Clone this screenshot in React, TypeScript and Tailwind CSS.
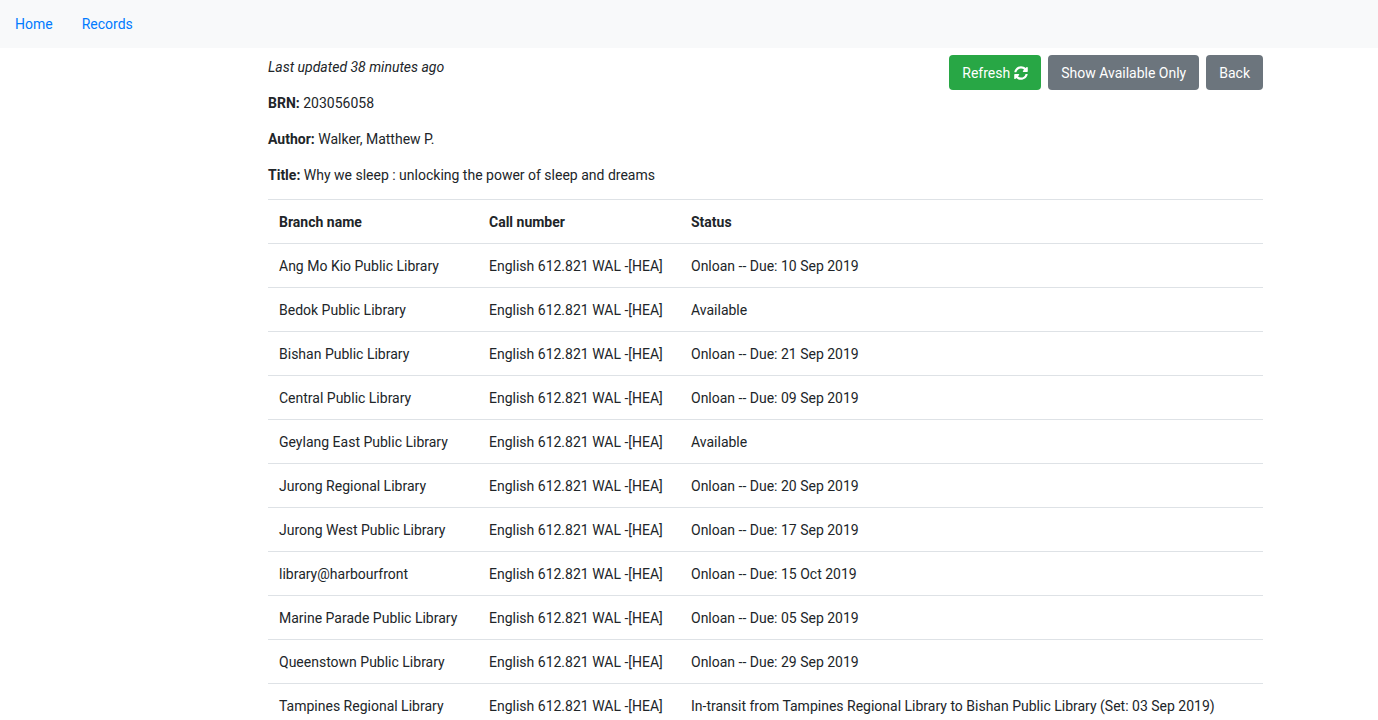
import { FaSyncAlt } from "react-icons/fa";

const call = "English 612.821 WAL -[HEA]";

const rows: [string, string][] = [
  ["Ang Mo Kio Public Library", "Onloan -- Due: 10 Sep 2019"],
  ["Bedok Public Library", "Available"],
  ["Bishan Public Library", "Onloan -- Due: 21 Sep 2019"],
  ["Central Public Library", "Onloan -- Due: 09 Sep 2019"],
  ["Geylang East Public Library", "Available"],
  ["Jurong Regional Library", "Onloan -- Due: 20 Sep 2019"],
  ["Jurong West Public Library", "Onloan -- Due: 17 Sep 2019"],
  ["library@harbourfront", "Onloan -- Due: 15 Oct 2019"],
  ["Marine Parade Public Library", "Onloan -- Due: 05 Sep 2019"],
  ["Queenstown Public Library", "Onloan -- Due: 29 Sep 2019"],
  [
    "Tampines Regional Library",
    "In-transit from Tampines Regional Library to Bishan Public Library (Set: 03 Sep 2019)",
  ],
];

const button = "rounded px-[13px] h-[35px] text-white whitespace-nowrap";

export default function App() {
  return (
    <div className="h-screen overflow-y-auto [scrollbar-width:none] bg-white font-['Roboto',sans-serif] text-[14px] leading-[22px] text-[#212529]">
      <nav className="flex h-12 items-center gap-[29px] bg-[#f8f9fa] px-[15px] text-[#007bff]">
        <a href="#home">Home</a>
        <a href="#records">Records</a>
      </nav>
      <main className="ml-[268px] mr-[115px] pt-[7px]">
        <div className="flex items-start justify-between">
          <div className="flex flex-col gap-[14px] pt-px pb-[13px]">
            <p className="italic">Last updated 38 minutes ago</p>
            <p><b>BRN:</b> 203056058</p>
            <p><b>Author:</b> Walker, Matthew P.</p>
            <p><b>Title:</b> Why we sleep : unlocking the power of sleep and dreams</p>
          </div>
          <div className="flex gap-[7px]">
            <button type="button" className={`${button} flex items-center gap-1 bg-[#28a745]`}>
              Refresh <FaSyncAlt aria-hidden="true" />
            </button>
            <button type="button" className={`${button} bg-[#6c757d]`}>Show Available Only</button>
            <button type="button" className={`${button} bg-[#6c757d]`}>Back</button>
          </div>
        </div>
        <table className="w-full table-fixed border-collapse text-left">
          <thead>
            <tr className="h-11 border-t border-[#dee2e6]">
              <th className="w-[210px] px-[11px] font-bold">Branch name</th>
              <th className="w-[202px] px-[11px] font-bold">Call number</th>
              <th className="px-[11px] font-bold">Status</th>
            </tr>
          </thead>
          <tbody>
            {rows.map(([branch, status]) => (
              <tr key={branch} className="h-11 border-t border-[#dee2e6]">
                <td className="px-[11px]">{branch}</td>
                <td className="px-[11px]">{call}</td>
                <td className="px-[11px]">{status}</td>
              </tr>
            ))}
          </tbody>
        </table>
      </main>
    </div>
  );
}
